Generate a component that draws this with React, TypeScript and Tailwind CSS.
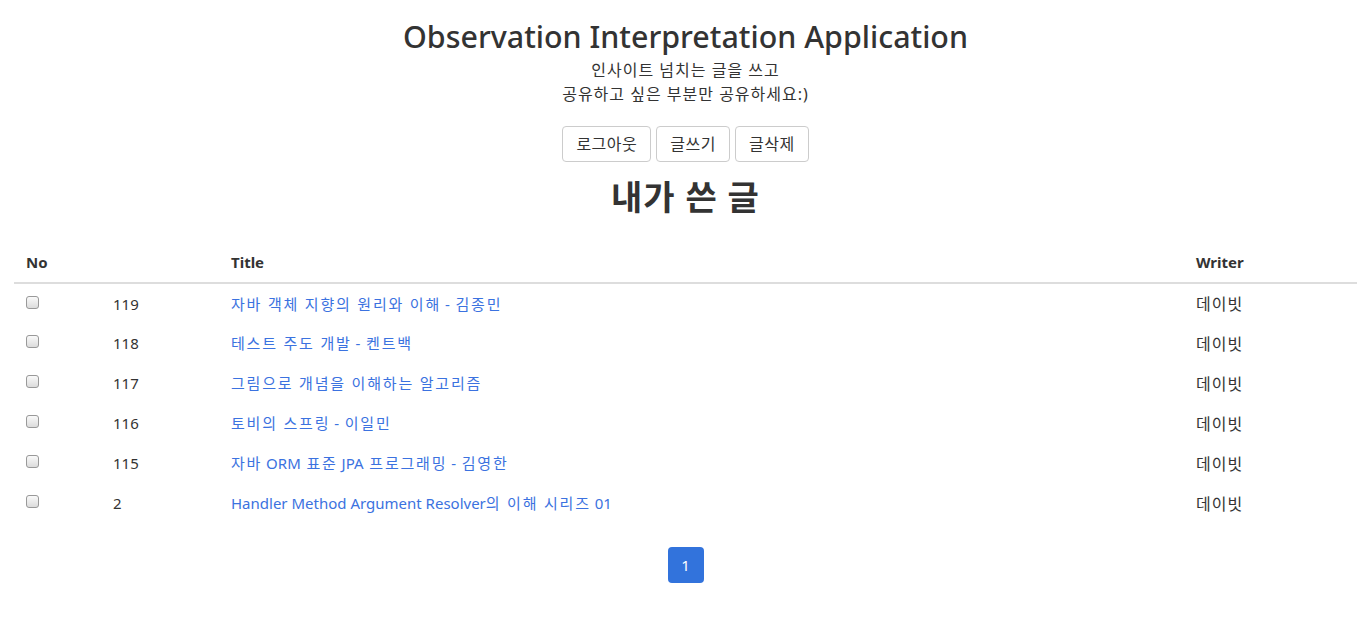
import React from "react";

const posts = [
  { id: 119, title: "자바 객체 지향의 원리와 이해 - 김종민", writer: "데이빗" },
  { id: 118, title: "테스트 주도 개발 - 켄트백", writer: "데이빗" },
  { id: 117, title: "그림으로 개념을 이해하는 알고리즘", writer: "데이빗" },
  { id: 116, title: "토비의 스프링 - 이일민", writer: "데이빗" },
  { id: 115, title: "자바 ORM 표준 JPA 프로그래밍 - 김영한", writer: "데이빗" },
  { id: 2, title: "Handler Method Argument Resolver의 이해 시리즈 01", writer: "데이빗" },
];

const font = { fontFamily: '"Noto Sans", "Noto Sans CJK KR", sans-serif' };

// 한글 구간만 자간을 조금 넓혀서 폭을 맞춘다
function Mixed({ text }: { text: string }) {
  return (
    <>
      {text.split(/([\uAC00-\uD7A3 ]*[\uAC00-\uD7A3])/).map((part, i) =>
        /[\uAC00-\uD7A3]/.test(part) ? (
          <span key={i} className="tracking-[1.8px]">{part}</span>
        ) : (
          <span key={i}>{part}</span>
        )
      )}
    </>
  );
}

function Btn({ label }: { label: string }) {
  return (
    <button className="h-[36px] px-[13px] border border-[#ccc] rounded-[4px] bg-white text-[16px] tracking-[0.5px] text-[#333]">
      {label}
    </button>
  );
}

export default function App() {
  return (
    <div style={font} className="min-h-[633px] bg-white text-[#333] pl-[14px] pr-[10px]">
      <div className="flex flex-col items-center">
        <h1 className="mt-[16px] text-[30.4px] leading-[42px] font-medium text-[#333]">Observation Interpretation Application</h1>
        <p className="text-[16px] leading-[24px] tracking-[1px]">인사이트 넘치는 글을 쓰고</p>
        <p className="text-[16px] leading-[24px] tracking-[1px]">공유하고 싶은 부분만 공유하세요:)</p>
        <div className="flex gap-[5px] mt-[20px]">
          <Btn label="로그아웃" />
          <Btn label="글쓰기" />
          <Btn label="글삭제" />
        </div>
        <h2 className="mt-[11px] text-[34px] font-bold leading-[48px] tracking-[1px]">내가 쓴 글</h2>
      </div>

      <table className="w-full mt-[21px] border-collapse text-[15px]">
        <thead>
          <tr className="border-b-2 border-[#ddd]">
            <th className="w-[87px] px-3 h-[41px] text-left font-bold">No</th>
            <th className="w-[118px]"></th>
            <th className="px-3 text-left font-bold">Title</th>
            <th className="w-[173px] px-3 text-left font-bold">Writer</th>
          </tr>
        </thead>
        <tbody>
          {posts.map((p) => (
            <tr key={p.id} className="h-[40px]">
              <td className="px-3">
                <span className="block w-[13px] h-[13px] rounded-[3px] border border-[#999] bg-gradient-to-b from-[#fafafa] to-[#dcdcdc] -mt-[3px]" />
              </td>
              <td className="px-3 pt-[1px]">{p.id}</td>
              <td className="px-3 pt-[1px]">
                <a href="#" className="text-[#3b72e0]">
                  <Mixed text={p.title} />
                </a>
              </td>
              <td className="px-3 pt-[1px] text-[16px] tracking-[1px]">{p.writer}</td>
            </tr>
          ))}
        </tbody>
      </table>

      <div className="flex justify-center mt-[24px]">
        <span className="w-[36px] h-[36px] rounded-[4px] bg-[#3273dc] text-white text-[15px] flex items-center justify-center">
          1
        </span>
      </div>
    </div>
  );
}
